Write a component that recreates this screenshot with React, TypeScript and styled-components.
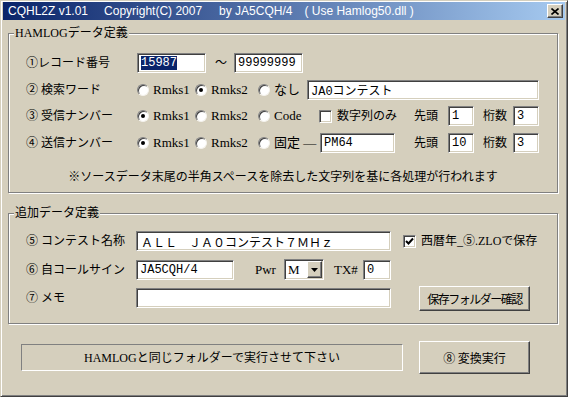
import React from 'react';
import styled, { createGlobalStyle } from 'styled-components';

const BG = '#d5cfbd';

const Global = createGlobalStyle`
  html, body { margin: 0; padding: 0; background: ${BG}; }
  body {
    font-family: "Liberation Serif", "Noto Sans CJK JP", serif;
    font-size: 12px;
    color: #000;
  }
`;

const Window = styled.div`
  width: 568px;
  height: 397px;
  box-sizing: border-box;
  background: ${BG};
  border-top: 1px solid ${BG};
  border-left: 1px solid ${BG};
  border-right: 1px solid #404040;
  border-bottom: 1px solid #404040;
  box-shadow: inset 1px 1px 0 #fff, inset -1px -1px 0 #808080;
  padding: 1px 2px 0 2px;
  display: flex;
  flex-direction: column;
`;

const TitleBar = styled.div`
  height: 18px;
  flex: none;
  display: flex;
  align-items: center;
  padding: 0 2px 0 5px;
  background: linear-gradient(to right, #0a246a, #a6caf0);
  color: #fff;
  font-family: "Liberation Sans", Arial, sans-serif;
  font-size: 12px;
`;

const TitlePart = styled.span<{ $ml: number }>`
  flex: none;
  margin-left: ${(p) => p.$ml}px;
  white-space: pre;
`;

const CloseBtn = styled.div`
  margin-left: auto;
  width: 16px;
  height: 14px;
  box-sizing: border-box;
  background: ${BG};
  border: 1px solid;
  border-color: #fff #404040 #404040 #fff;
  box-shadow: inset -1px -1px 0 #808080;
  display: flex;
  align-items: center;
  justify-content: center;
`;

const Body = styled.div`
  padding: 0 5px;
`;

const Group = styled.div<{ $h: number; $mt: number; $pt: number }>`
  position: relative;
  box-sizing: border-box;
  width: 550px;
  height: ${(p) => p.$h}px;
  margin-top: ${(p) => p.$mt}px;
  padding: ${(p) => p.$pt}px 0 0 17px;
  border: 1px solid #808080;
  box-shadow: inset 1px 1px 0 #fff, 1px 1px 0 #fff;
`;

const Legend = styled.span`
  position: absolute;
  top: -8px;
  left: 5px;
  padding: 0 1px;
  background: ${BG};
  line-height: 14px;
`;

const Row = styled.div<{ $mt?: number; $h?: number }>`
  display: flex;
  align-items: center;
  height: ${(p) => p.$h ?? 20}px;
  margin-top: ${(p) => p.$mt ?? 0}px;
`;

const Label = styled.span<{ $w: number; $pl?: number }>`
  flex: none;
  width: ${(p) => p.$w}px;
  box-sizing: border-box;
  padding-left: ${(p) => p.$pl ?? 0}px;
  line-height: 14px;
  white-space: nowrap;
`;

const Field = styled.div<{ $w: number; $wide?: boolean }>`
  flex: none;
  width: ${(p) => p.$w}px;
  height: 20px;
  box-sizing: border-box;
  background: #fff;
  border: 1px solid;
  border-color: #808080 #fff #fff #808080;
  box-shadow: inset 1px 1px 0 #404040, inset -1px -1px 0 ${BG};
  padding-left: ${(p) => (p.$wide ? 4 : 3)}px;
  display: flex;
  align-items: center;
  font-family: ${(p) =>
    p.$wide
      ? '"Noto Sans CJK JP", sans-serif'
      : '"Liberation Mono", "Noto Sans CJK JP", monospace'};
  font-size: 12px;
  white-space: nowrap;
  overflow: hidden;
`;

const Selected = styled.span`
  background: #0a246a;
  color: #fff;
  line-height: 14px;
`;

const Choice = styled.span<{ $w: number }>`
  flex: none;
  width: ${(p) => p.$w}px;
  display: flex;
  align-items: center;
  gap: 4px;
  line-height: 14px;
  white-space: nowrap;
`;

const ChoiceText = styled.span`
  font-size: 13px;
`;

const RadioDot = styled.span<{ $on?: boolean }>`
  flex: none;
  width: 12px;
  height: 12px;
  box-sizing: border-box;
  border-radius: 50%;
  background: #fff;
  border: 1px solid;
  border-color: #808080 #f4f2ec #f4f2ec #808080;
  box-shadow: inset 1px 1px 0 #404040;
  display: flex;
  align-items: center;
  justify-content: center;
  &::after {
    content: '';
    width: 4px;
    height: 4px;
    border-radius: 50%;
    background: ${(p) => (p.$on ? '#000' : 'transparent')};
  }
`;

const CheckBox = styled.span`
  flex: none;
  width: 13px;
  height: 13px;
  box-sizing: border-box;
  background: #fff;
  border: 1px solid;
  border-color: #808080 #fff #fff #808080;
  box-shadow: inset 1px 1px 0 #404040, inset -1px -1px 0 ${BG};
  display: flex;
  align-items: center;
  justify-content: center;
  margin-right: 1px;
`;

const Spacer = styled.span<{ $w: number }>`
  flex: none;
  width: ${(p) => p.$w}px;
`;

const Note = styled.div`
  margin: 16px 0 0 -17px;
  text-align: center;
  line-height: 14px;
  font-family: "Noto Sans CJK JP", sans-serif;
`;

const Select = styled.div`
  flex: none;
  width: 40px;
  height: 21px;
  box-sizing: border-box;
  background: #fff;
  border: 1px solid;
  border-color: #808080 #fff #fff #808080;
  box-shadow: inset 1px 1px 0 #404040, inset -1px -1px 0 ${BG};
  display: flex;
  align-items: center;
  justify-content: space-between;
  padding: 1px 1px 1px 3px;
  font-size: 13px;
`;

const DropBtn = styled.span`
  width: 15px;
  height: 17px;
  box-sizing: border-box;
  background: ${BG};
  border: 1px solid;
  border-color: #fff #404040 #404040 #fff;
  box-shadow: inset -1px -1px 0 #808080;
  display: flex;
  align-items: center;
  justify-content: center;
`;

const Button = styled.div<{ $w: number; $h: number; $tight?: boolean }>`
  flex: none;
  width: ${(p) => p.$w}px;
  height: ${(p) => p.$h}px;
  box-sizing: border-box;
  background: ${BG};
  border: 1px solid;
  border-color: #fff #404040 #404040 #fff;
  box-shadow: inset -1px -1px 0 #808080;
  display: flex;
  align-items: center;
  justify-content: center;
  font-family: "Noto Sans CJK JP", sans-serif;
  letter-spacing: ${(p) => (p.$tight ? '-1.5px' : '0')};
  white-space: nowrap;
`;

const Footer = styled.div`
  display: flex;
  align-items: center;
  gap: 16px;
  margin-top: 17px;
  padding-left: 13px;
  height: 33px;
`;

const StatusPanel = styled.div`
  width: 382px;
  height: 27px;
  box-sizing: border-box;
  border: 1px solid;
  border-color: #808080 #fff #fff #808080;
  display: flex;
  align-items: center;
  justify-content: center;
  line-height: 14px;
`;

const Radio = ({ w, on, children }: { w: number; on?: boolean; children: React.ReactNode }) => (
  <Choice $w={w}>
    <RadioDot $on={on} />
    <ChoiceText>{children}</ChoiceText>
  </Choice>
);

const Check = ({ w, on, children }: { w: number; on?: boolean; children: React.ReactNode }) => (
  <Choice $w={w}>
    <CheckBox>
      {on && (
        <svg width="9" height="9" viewBox="0 0 9 9">
          <path d="M1 4 L3.5 6.5 L8 1.5" stroke="#000" strokeWidth="2" fill="none" />
        </svg>
      )}
    </CheckBox>
    {children}
  </Choice>
);

function App() {
  return (
    <Window>
      <Global />
      <TitleBar>
        <TitlePart $ml={0}>CQHL2Z v1.01</TitlePart>
        <TitlePart $ml={16}>Copyright(C) 2007</TitlePart>
        <TitlePart $ml={17}>by JA5CQH/4</TitlePart>
        <TitlePart $ml={12}>( Use Hamlog50.dll )</TitlePart>
        <CloseBtn>
          <svg width="8" height="7" viewBox="0 0 8 7">
            <path d="M0.5 0.5 L7.5 6.5 M7.5 0.5 L0.5 6.5" stroke="#000" strokeWidth="1.6" />
          </svg>
        </CloseBtn>
      </TitleBar>
      <Body>
        <Group $h={160} $mt={13} $pt={19}>
          <Legend>HAMLOGデータ定義</Legend>
          <Row>
            <Label $w={111}>①レコード番号</Label>
            <Field $w={69}>
              <Selected>15987</Selected>
            </Field>
            <Label $w={28} $pl={9}>～</Label>
            <Field $w={69}>99999999</Field>
          </Row>
          <Row $mt={7}>
            <Label $w={111}>② 検索ワード</Label>
            <Radio w={58}>Rmks1</Radio>
            <Radio w={63} on>Rmks2</Radio>
            <Radio w={49}>なし</Radio>
            <Field $w={232}>JA0コンテスト</Field>
          </Row>
          <Row $mt={6}>
            <Label $w={111}>③ 受信ナンバー</Label>
            <Radio w={58} on>Rmks1</Radio>
            <Radio w={63}>Rmks2</Radio>
            <Radio w={61}>Code</Radio>
            <Check w={95}>数字列のみ</Check>
            <Label $w={34}>先頭</Label>
            <Field $w={26}>1</Field>
            <Label $w={39} $pl={9}>桁数</Label>
            <Field $w={26}>3</Field>
          </Row>
          <Row $mt={7}>
            <Label $w={111}>④ 送信ナンバー</Label>
            <Radio w={58} on>Rmks1</Radio>
            <Radio w={63}>Rmks2</Radio>
            <Radio w={62}>固定 —</Radio>
            <Field $w={75}>PM64</Field>
            <Spacer $w={19} />
            <Label $w={34}>先頭</Label>
            <Field $w={26}>10</Field>
            <Label $w={39} $pl={9}>桁数</Label>
            <Field $w={26}>3</Field>
          </Row>
          <Note>※ソースデータ末尾の半角スペースを除去した文字列を基に各処理が行われます</Note>
        </Group>

        <Group $h={111} $mt={20} $pt={17}>
          <Legend>追加データ定義</Legend>
          <Row>
            <Label $w={110}>⑤ コンテスト名称</Label>
            <Field $w={255} $wide>ＡＬＬ　ＪＡ０コンテスト７ＭＨｚ</Field>
            <Spacer $w={12} />
            <Check w={150} on>西暦年_⑤.ZLOで保存</Check>
          </Row>
          <Row $mt={8} $h={21}>
            <Label $w={110}>⑥ 自コールサイン</Label>
            <Field $w={98}>JA5CQH/4</Field>
            <Label $w={50} $pl={21}>
              <ChoiceText>Pwr</ChoiceText>
            </Label>
            <Select>
              M
              <DropBtn>
                <svg width="7" height="4" viewBox="0 0 7 4">
                  <path d="M0 0 H7 L3.5 4 Z" fill="#000" />
                </svg>
              </DropBtn>
            </Select>
            <Label $w={39} $pl={10}>
              <ChoiceText>TX#</ChoiceText>
            </Label>
            <Field $w={28}>0</Field>
          </Row>
          <Row $mt={8}>
            <Label $w={110}>⑦ メモ</Label>
            <Field $w={255} />
            <Spacer $w={28} />
            <Button $w={111} $h={25} $tight>保存フォルダー確認</Button>
          </Row>
        </Group>

        <Footer>
          <StatusPanel>HAMLOGと同じフォルダーで実行させて下さい</StatusPanel>
          <Button $w={111} $h={33}>⑧ 変換実行</Button>
        </Footer>
      </Body>
    </Window>
  );
}

export default App;
